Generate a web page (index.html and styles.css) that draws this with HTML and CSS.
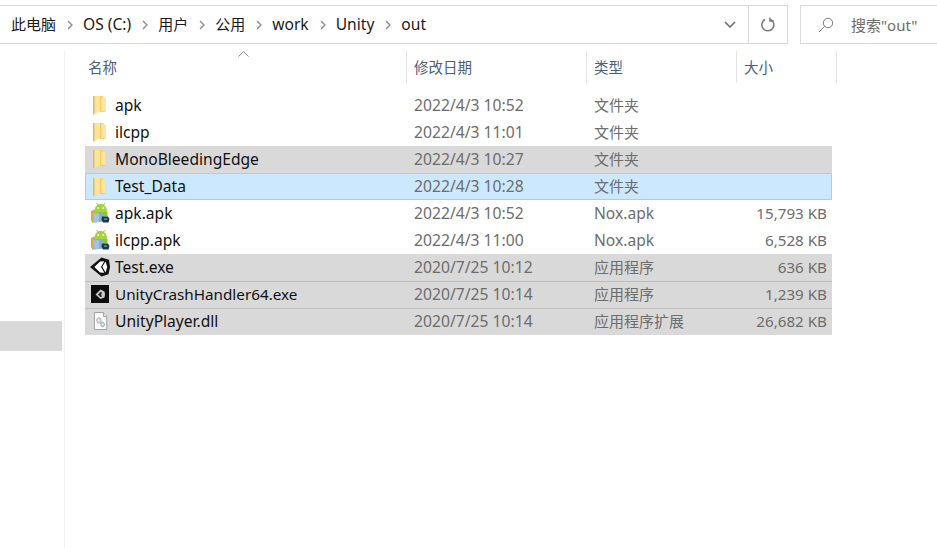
FILE: index.html
```html
<!DOCTYPE html>
<html lang="zh-CN">
<head>
<meta charset="utf-8">
<title>out</title>
<link rel="stylesheet" href="styles.css">
</head>
<body>
<svg class="defs" width="0" height="0" aria-hidden="true">
  <defs>
    <symbol id="folder" viewBox="0 0 20 20">
      <path d="M3 1h10l1 2h1.500v13H3z" fill="#f6d477"/>
      <path d="M8.500 2.500h7v13.500h-7z" fill="#fbe5a0"/>
      <path d="M3 1h7v15.500l-7 3z" fill="#fde49a"/>
      <path d="M3 1v18.500l1.500-.6V1z" fill="#e9b94f"/>
      <path d="M10 1.500h1.200v15H10z" fill="#f1c965"/>
      <path d="M10 16h5.500v.7H10z" fill="#e6bf60"/>
    </symbol>
    <symbol id="apk" viewBox="0 0 20 20">
      <path d="M4.500 9C4.500 3 7.500 1 10.500 1s6.500 2 6.500 8z" fill="#a4d63c"/>
      <path d="M6.500.2 8.500 2.500M15 .2l-2 2.300" stroke="#86b52c" stroke-width=".9"/>
      <circle cx="8.200" cy="5" r=".9" fill="#f4fbe6"/><circle cx="13.300" cy="5" r=".9" fill="#f4fbe6"/>
      <path d="M5 9h12.500v4.500H5z" fill="#8fc62f"/>
      <path d="M1 8l3-1.500 1.500 1v11l-3 1.500-1.500-3z" fill="#d8ab52"/>
      <path d="M3 10.500 13.500 9.500l1 4-1 5-9.500 1z" fill="#85afd6"/>
      <path d="M3 10.500l6-.6v9.200l-5 .4z" fill="#a0c4e2"/>
      <path d="M12 13.500h6l1.500 2.500-1 3.500h-5.500l-1.500-3z" fill="#1f3844"/>
      <path d="M14 15.300h3.200v1.700H14z" fill="#3d90a8"/>
    </symbol>
    <symbol id="unity" viewBox="0 0 20 20">
      <path d="M11.500 0.500 19 2.700 20 10 18.500 17.300 11.500 19.500 0 10z" fill="#111"/>
      <path d="M4.300 10 10 4.600l4.300-.4L11 10z M11 10l3.300 5.800-4.300-.4L4.300 10z M12.500 9.500 15.500 4.500l1.800 5.500-1.800 5.500-3-5.500z" fill="#fff"/>
    </symbol>
    <symbol id="crash" viewBox="-1 -1 20 20">
      <rect width="18" height="18" fill="#0d0d0d"/>
      <path d="M9.500 4.500 13.500 6.500 14 9.500l-.5 3-4 1.500-5-4.500z" fill="#c9c9c9"/>
      <path d="M7 9.500 9.500 7l1.500.5L10 9.500l1 2-1.500.5z" fill="#222"/>
    </symbol>
    <symbol id="dll" viewBox="-4 -1 20 20">
      <g transform="scale(.82 1)">
      <path d="M.5.500h11l4 4v13H.5z" fill="#fdfdfd" stroke="#9a9a9a"/>
      <path d="M11.500.500v4h4" fill="#e6e6e6" stroke="#9a9a9a"/>
      <circle cx="6" cy="8.500" r="2.700" fill="#d8d8d8" stroke="#8d8d8d" stroke-dasharray="1.200 .6"/>
      <circle cx="6" cy="8.500" r=".9" fill="#fff"/>
      <circle cx="10.500" cy="12.500" r="2.400" fill="#b8d6ee" stroke="#6d9ac2" stroke-dasharray="1.200 .6"/>
      <circle cx="10.500" cy="12.500" r=".8" fill="#fff"/>
      </g>
    </symbol>
  </defs>
</svg>

<header class="toolbar">
  <div class="address">
    <nav class="crumbs">
      <span>此电脑</span><svg class="sep" viewBox="0 0 6 10"><path d="M1 1l4 4-4 4"/></svg>
      <span class="lat">OS (C:)</span><svg class="sep" viewBox="0 0 6 10"><path d="M1 1l4 4-4 4"/></svg>
      <span>用户</span><svg class="sep" viewBox="0 0 6 10"><path d="M1 1l4 4-4 4"/></svg>
      <span>公用</span><svg class="sep" viewBox="0 0 6 10"><path d="M1 1l4 4-4 4"/></svg>
      <span class="lat">work</span><svg class="sep" viewBox="0 0 6 10"><path d="M1 1l4 4-4 4"/></svg>
      <span class="lat">Unity</span><svg class="sep" viewBox="0 0 6 10"><path d="M1 1l4 4-4 4"/></svg>
      <span class="lat">out</span>
    </nav>
    <div class="drop"><svg class="chev" viewBox="0 0 12 7"><path d="M1 1l5 5 5-5"/></svg></div>
    <div class="refresh"><svg class="ref-ic" viewBox="0 0 16 16"><path d="M10.500 2.400a6 6 0 1 1-5.500.1"/><path d="M10 .5v3.600h3.600"/></svg></div>
  </div>
  <div class="search">
    <svg class="lens" viewBox="0 0 16 16"><circle cx="10" cy="6" r="4.700"/><path d="M6.700 9.300 1 15"/></svg>
    <span>搜索"out"</span>
  </div>
</header>

<div class="body">
  <aside class="side"><div class="side-sel"></div></aside>
  <main class="list">
    <div class="head">
      <div class="hcol hname">名称<svg class="sort" viewBox="0 0 11 6"><path d="M.5 5.500 5.500.5l5 5"/></svg></div>
      <div class="hcol hdate">修改日期</div>
      <div class="hcol htype">类型</div>
      <div class="hcol hsize">大小</div>
    </div>
    <div class="rows">
      <div class="row"><div class="name"><svg class="ic"><use href="#folder"/></svg>apk</div><div class="date">2022/4/3 10:52</div><div class="type">文件夹</div><div class="size"></div></div>
      <div class="row"><div class="name"><svg class="ic"><use href="#folder"/></svg>ilcpp</div><div class="date">2022/4/3 11:01</div><div class="type">文件夹</div><div class="size"></div></div>
      <div class="row gray"><div class="name"><svg class="ic"><use href="#folder"/></svg>MonoBleedingEdge</div><div class="date">2022/4/3 10:27</div><div class="type">文件夹</div><div class="size"></div></div>
      <div class="row sel"><div class="name"><svg class="ic"><use href="#folder"/></svg>Test_Data</div><div class="date">2022/4/3 10:28</div><div class="type">文件夹</div><div class="size"></div></div>
      <div class="row"><div class="name"><svg class="ic"><use href="#apk"/></svg>apk.apk</div><div class="date">2022/4/3 10:52</div><div class="type lat">Nox.apk</div><div class="size">15,793 KB</div></div>
      <div class="row"><div class="name"><svg class="ic"><use href="#apk"/></svg>ilcpp.apk</div><div class="date">2022/4/3 11:00</div><div class="type lat">Nox.apk</div><div class="size">6,528 KB</div></div>
      <div class="row gray"><div class="name"><svg class="ic"><use href="#unity"/></svg>Test.exe</div><div class="date">2020/7/25 10:12</div><div class="type">应用程序</div><div class="size">636 KB</div></div>
      <div class="row gray line"><div class="name"><svg class="ic"><use href="#crash"/></svg><span class="crash-name">UnityCrashHandler64.exe</span></div><div class="date">2020/7/25 10:14</div><div class="type">应用程序</div><div class="size">1,239 KB</div></div>
      <div class="row gray line"><div class="name"><svg class="ic"><use href="#dll"/></svg>UnityPlayer.dll</div><div class="date">2020/7/25 10:14</div><div class="type">应用程序扩展</div><div class="size">26,682 KB</div></div>
    </div>
  </main>
</div>
</body>
</html>
```
FILE: styles.css
```css
* { box-sizing: border-box; }
html, body { margin: 0; height: 100%; overflow: hidden; background: #fff; }
body {
  display: flex;
  flex-direction: column;
  font-family: "Noto Sans", "Noto Sans CJK SC", sans-serif;
  font-size: 15px;
  color: #1a1a1a;
}
.defs { display: block; height: 0; }
.lat { font-size: 15.600px; }

.toolbar { display: flex; height: 44px; padding-top: 5px; flex: none; }
.address {
  display: flex;
  width: 788px;
  height: 39px;
  border: solid #d9d9d9;
  border-width: 1px 1px 1px 0;
}
.crumbs { flex: 1; display: flex; align-items: center; padding-left: 11px; }
.crumbs span { line-height: 34px; height: 36px; white-space: nowrap; }
.sep { width: 6px; height: 10px; margin: 0 10px 0 11px; }
.sep path { fill: none; stroke: #8a8a8a; stroke-width: 1.300; }
.drop { width: 37px; display: flex; align-items: center; justify-content: center; }
.chev { width: 12px; height: 7px; }
.chev path { fill: none; stroke: #6d6d6d; stroke-width: 1.600; }
.refresh {
  width: 39px;
  border-left: 1px solid #d9d9d9;
  display: flex;
  align-items: center;
  justify-content: center;
}
.ref-ic { width: 16px; height: 16px; }
.ref-ic path { fill: none; stroke: #7a7a7a; stroke-width: 1.500; }
.search {
  margin-left: 12px;
  flex: 1;
  height: 39px;
  border: solid #d9d9d9;
  border-width: 1px 0 1px 1px;
  display: flex;
  align-items: center;
  padding-left: 17px;
  color: #6d6d6d;
}
.lens { width: 16px; height: 16px; margin-right: 17px; }
.lens circle, .lens path { fill: none; stroke: #7a7a7a; stroke-width: 1; }

.body { flex: 1; display: flex; min-height: 0; padding-top: 7px; }
.side { width: 65px; flex: none; border-right: 1px solid #f0f0f0; padding-top: 270px; }
.side-sel { width: 62px; height: 30px; background: #d9d9d9; }

.list { width: 767px; margin-left: 20px; flex: none; }
.head { display: grid; grid-template-columns: 322px 180px 150px 100px; height: 32px; }
.hcol {
  position: relative;
  font-size: 14.500px;
  line-height: 32px;
  color: #4c607a;
  border-right: 1px solid #e4e4e4;
  padding-left: 7px;
}
.hname { padding-left: 3px; }
.sort { position: absolute; left: 153px; top: 0; width: 11px; height: 6px; }
.sort path { fill: none; stroke: #8a8a8a; stroke-width: 1; }

.rows { margin-top: 9px; width: 747px; }
.row {
  display: grid;
  grid-template-columns: 322px 180px 150px 95px;
  height: 27px;
  line-height: 26px;
  white-space: nowrap;
}
.gray { background: #d9d9d9; }
.line { border-top: 1px solid #bdbdbd; }
.line > div { margin-top: -1px; }
.sel { background: #cce8ff; border: 1px solid #99d1ff; line-height: 25px; }
.sel > .name, .sel > .date, .sel > .type { margin-left: -1px; }
.name { display: flex; align-items: center; padding-left: 5px; color: #111; font-size: 15.600px; height: 25px; }
.crash-name { font-size: 15.250px; }
.ic { width: 20px; height: 20px; margin-right: 5px; flex: none; }
.date { padding-left: 7px; color: #6d6d6d; font-size: 15.700px; }
.type { padding-left: 7px; color: #6d6d6d; }
.size { text-align: right; padding-right: 5px; color: #6d6d6d; font-size: 15.200px; }
```
